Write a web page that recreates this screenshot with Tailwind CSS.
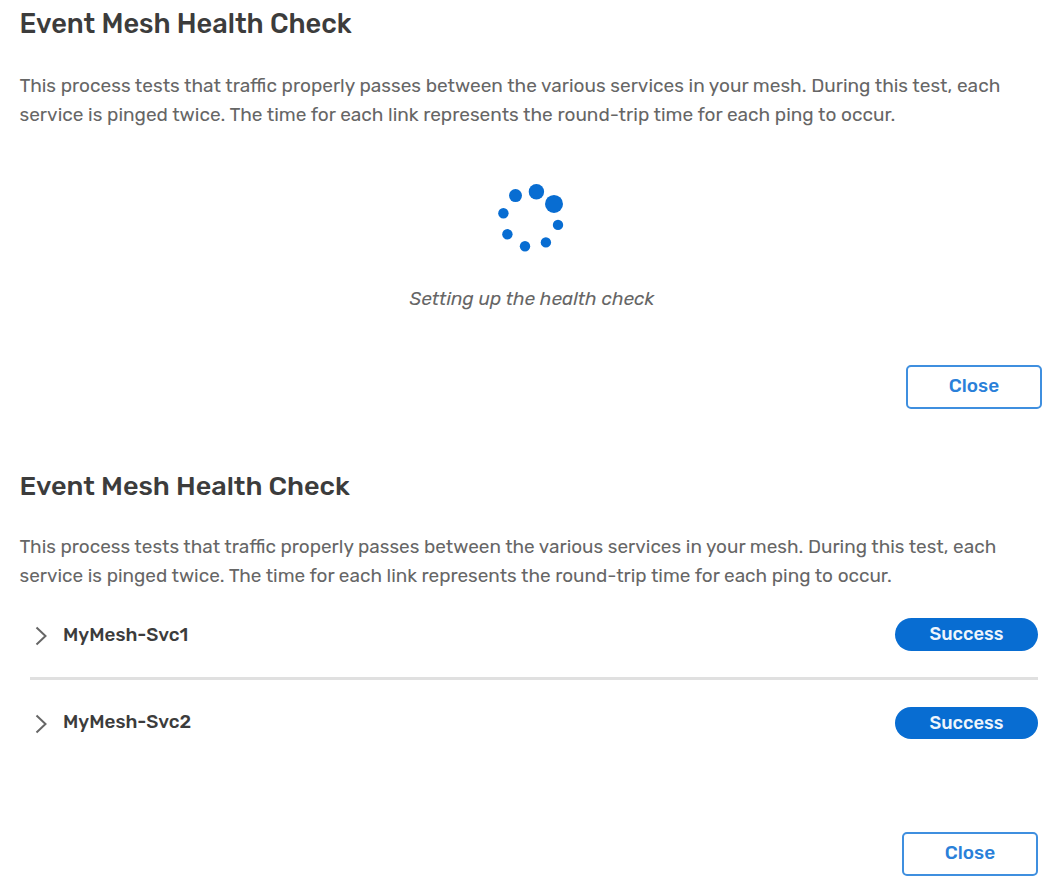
<!DOCTYPE html>
<html lang="en">
<head>
<meta charset="utf-8">
<title>Event Mesh Health Check</title>
<script src="https://cdn.jsdelivr.net/npm/@tailwindcss/browser@4"></script>
</head>
<body class="w-[1060px] h-[896px] overflow-hidden bg-white font-['Rubik','Roboto',sans-serif] text-[#666]">
<section class="h-[462px] flex flex-col pl-[19.5px] pr-[18px] pt-1">
  <h1 class="h-10 leading-10 text-[27.15px] font-medium text-[#3c3c3c] whitespace-nowrap">Event Mesh Health Check</h1>
  <p class="mt-[27px] text-[19.05px] leading-[29px] whitespace-nowrap">This process tests that traffic properly passes between the various services in your mesh. During this test, each<br>service is pinged twice. The time for each link represents the round-trip time for each ping to occur.</p>
  <svg class="mt-[51px] ml-[470.5px] w-[84px] h-[80px] shrink-0 fill-[#086dd2]" viewBox="490 180 84 80">
    <circle cx="536.4" cy="191.8" r="7.7"/><circle cx="554" cy="203.9" r="9"/><circle cx="558" cy="224.9" r="5.2"/><circle cx="545.9" cy="242.4" r="5.2"/><circle cx="525" cy="246.3" r="5.2"/><circle cx="507.4" cy="234.3" r="5.2"/><circle cx="503.4" cy="213.3" r="5.2"/><circle cx="515.5" cy="195.6" r="6.5"/>
  </svg>
  <p class="mt-[25px] ml-[390px] h-7 leading-7 text-[19px] italic whitespace-nowrap">Setting up the health check</p>
  <button class="mt-[52px] self-end w-[136px] h-11 shrink-0 border-2 border-[#3f8fdf] rounded-[5px] pb-0.5 text-[19px] font-medium text-[#2a80d9]">Close</button>
</section>
<section class="h-[434px] flex flex-col pl-[19.5px] pr-[22px] pt-1">
  <h1 class="h-10 leading-10 text-[27px] font-medium text-[#3c3c3c] whitespace-nowrap">Event Mesh Health Check</h1>
  <p class="mt-[26px] text-[18.97px] leading-[29px] whitespace-nowrap">This process tests that traffic properly passes between the various services in your mesh. During this test, each<br>service is pinged twice. The time for each link represents the round-trip time for each ping to occur.</p>
  <div class="ml-[10.5px] mt-7 h-[62px] border-b-3 border-[#e0e0e0] flex items-start">
    <svg class="ml-[5px] mt-2 w-3 h-5 fill-none stroke-[#666] stroke-2" viewBox="0 0 12 20"><path d="M1.5 1.5L10.5 10L1.5 18.5"/></svg>
    <span class="ml-4 mt-[3px] leading-7 text-[18.9px] font-medium text-[#3c3c3c]">MyMesh-Svc1</span>
    <span class="ml-auto w-[143px] h-[33px] rounded-full bg-[#086dd2] text-[#eef5fc] text-[18.3px] leading-[33px] font-medium text-center">Success</span>
  </div>
  <div class="ml-[10.5px] mt-[27px] h-[60px] flex items-start">
    <svg class="ml-[5px] mt-[7px] w-3 h-5 fill-none stroke-[#666] stroke-2" viewBox="0 0 12 20"><path d="M1.5 1.5L10.5 10L1.5 18.5"/></svg>
    <span class="ml-4 mt-px leading-7 text-[18.9px] font-medium text-[#3c3c3c]">MyMesh-Svc2</span>
    <span class="ml-auto w-[143px] h-8 rounded-full bg-[#086dd2] text-[#eef5fc] text-[18.3px] leading-8 font-medium text-center">Success</span>
  </div>
  <button class="mt-[65px] self-end w-[136px] h-11 shrink-0 border-2 border-[#3f8fdf] rounded-[5px] pb-0.5 text-[19px] font-medium text-[#2a80d9]">Close</button>
</section>
</body>
</html>
